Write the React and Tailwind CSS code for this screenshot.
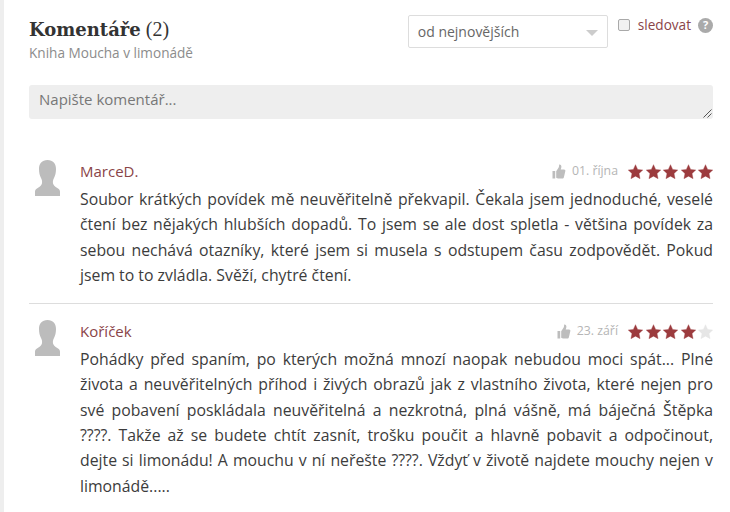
function Star({ on }) {
  return (
    <svg width="15" height="15" viewBox="0 0 24 23" className="block">
      <path
        d="M12 0.5l3.500 7.600 8.200 1-6 5.700 1.600 8.200L12 18.900 4.700 23l1.600-8.200-6-5.700 8.200-1z"
        fill={on ? "#9c3b3e" : "#e6e6e6"}
        stroke={on ? "#9c3b3e" : "#e6e6e6"}
        strokeWidth="0.500"
        strokeLinejoin="round"
      />
    </svg>
  );
}

function Thumb() {
  return (
    <svg width="14" height="15" viewBox="0 0 14 15" className="block">
      <path
        d="M0.500 7h2.700v7.500H0.500zM4.200 7.200l2.300-3.400c.5-.8.600-1.800.7-3.300 1.500-.2 2.300.9 2.200 2.400-.1.900-.4 1.800-.7 2.700h3.300c1 0 1.600.8 1.300 1.700l-1.400 5.900c-.2.700-.7 1.300-1.500 1.300H6.200c-.8 0-1.300-.3-2-.7z"
        fill="#bdbdbd"
      />
    </svg>
  );
}

function Avatar() {
  return (
    <svg width="25" height="36" viewBox="0 0 25 36" className="block">
      <path
        d="M12.500 0C18 0 21 3.500 21 9c0 3.500-.7 6.500-2 9-1.100 2-1.400 4-.8 6 .8 2.200 3.300 3.300 5.200 4.700.9.700 1.600 1.700 1.600 3V36H0v-4.300c0-1.300.7-2.300 1.600-3C3.500 27.300 6 26.200 6.800 24c.6-2 .3-4-.8-6-1.300-2.500-2-5.500-2-9 0-5.500 3-9 8.500-9z"
        fill="#bcbcbc"
      />
    </svg>
  );
}

function Comment({ name, date, stars, text }) {
  return (
    <div className="flex">
      <div className="w-[51px] shrink-0 pl-[6px] pt-[1px]">
        <Avatar />
      </div>
      <div className="flex-1 min-w-0">
        <div className="flex items-center justify-between h-[25px] mb-[3px]">
          <span className="text-[15px] text-[#8a4448]">{name}</span>
          <div className="flex items-center">
            <Thumb />
            <span className="ml-[6px] text-[12.300px] text-[#b5b5b5]">{date}</span>
            <div className="ml-[10px] flex gap-[2.500px]">
              {[0, 1, 2, 3, 4].map((i) => (
                <Star key={i} on={i < stars} />
              ))}
            </div>
          </div>
        </div>
        <p className="text-[15.800px] leading-[25.300px] text-[#3c3c3c] text-justify">{text}</p>
      </div>
    </div>
  );
}

export default function App() {
  return (
    <div
      className="w-[730px] h-[512px] overflow-hidden bg-white border-l-[4px] border-[#eeeeee] pl-[25px] pr-[17px]"
      style={{ fontFamily: '"Open Sans", sans-serif' }}
    >
      <div className="flex items-start pt-[15px] h-[85px]">
        <div className="flex-1">
          <h2 className="text-[20px] leading-[27px] mt-[1px] text-[#333333] font-['Liberation_Serif',serif]">
            <span className="font-bold font-['DejaVu_Serif',serif] text-[18px]">Komentáře</span> (2)
          </h2>
          <div className="mt-[1px] text-[13.600px] leading-[18px] text-[#8c8c8c]">Kniha Moucha v limonádě</div>
        </div>
        <div className="flex w-[200px] h-[33px] items-center justify-between border border-[#dddddd] rounded-[2px] pl-[9px] pr-[9px] text-[14px] text-[#666666]">
          <span>od nejnovějších</span>
          <span className="mt-[3px] border-x-[6px] border-t-[6px] border-x-transparent border-t-[#cccccc]" />
        </div>
        <label className="ml-[10px] flex items-center h-[20px] text-[13.600px] text-[#8a4448]">
          <span className="w-[12px] h-[12px] rounded-[2px] border border-[#a9a9a9] bg-[#f1f1f1]" />
          <span className="ml-[8px]">sledovat</span>
          <span className="ml-[7px] w-[15px] h-[15px] rounded-full bg-[#aaaaaa] text-white text-[11px] font-bold flex items-center justify-center">?</span>
        </label>
      </div>
      <div className="relative h-[34px] rounded-[3px] bg-[#eeeeee] pl-[10px] pt-[5px] text-[15px] leading-[19px] text-[#777777]">
        Napište komentář...
        <svg width="9" height="9" viewBox="0 0 9 9" className="absolute right-[1px] bottom-[1px]">
          <path d="M0.500 8.500L8.500 0.500M4.500 8.500L8.500 4.500" stroke="#555555" strokeWidth="1" />
        </svg>
      </div>
      <div className="mt-[40px] pb-[15px] border-b border-[#dddddd]">
        <Comment
          name="MarceD."
          date="01. října"
          stars={5}
          text="Soubor krátkých povídek mě neuvěřitelně překvapil. Čekala jsem jednoduché, veselé čtení bez nějakých hlubších dopadů. To jsem se ale dost spletla - většina povídek za sebou nechává otazníky, které jsem si musela s odstupem času zodpovědět. Pokud jsem to to zvládla. Svěží, chytré čtení."
        />
      </div>
      <div className="mt-[15px]">
        <Comment
          name="Koříček"
          date="23. září"
          stars={4}
          text="Pohádky před spaním, po kterých možná mnozí naopak nebudou moci spát... Plné života a neuvěřitelných příhod i živých obrazů jak z vlastního života, které nejen pro své pobavení poskládala neuvěřitelná a nezkrotná, plná vášně, má báječná Štěpka ????. Takže až se budete chtít zasnít, trošku poučit a hlavně pobavit a odpočinout, dejte si limonádu! A mouchu v ní neřešte ????. Vždyť v životě najdete mouchy nejen v limonádě....."
        />
      </div>
    </div>
  );
}
